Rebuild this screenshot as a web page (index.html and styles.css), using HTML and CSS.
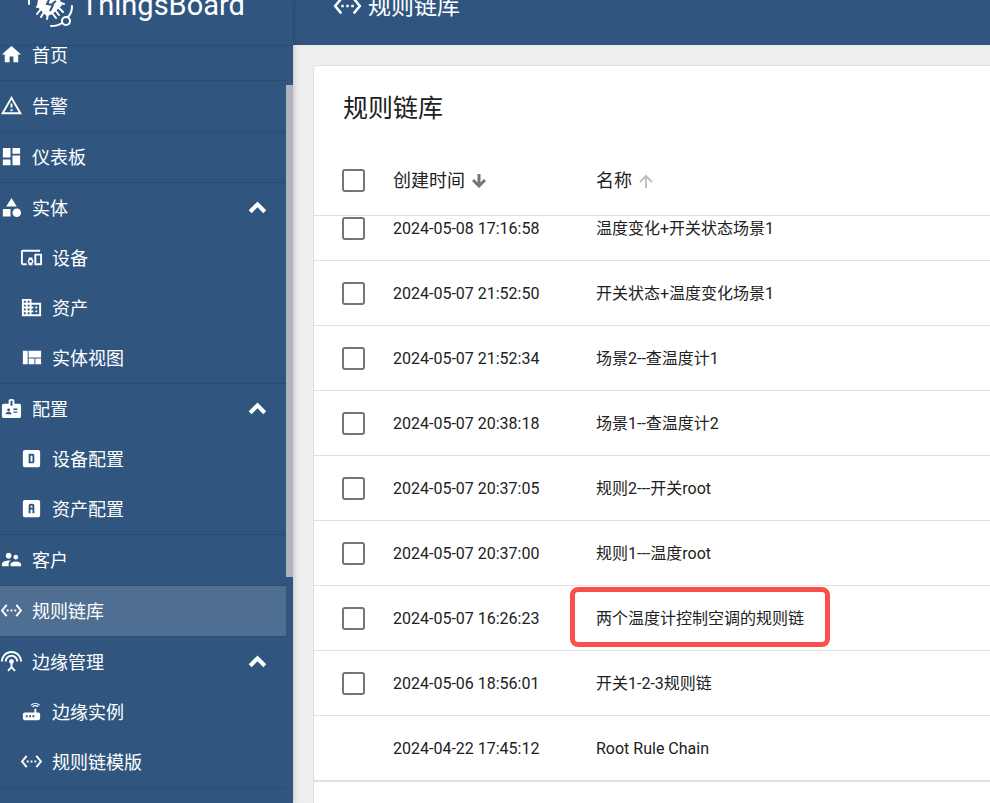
FILE: index.html
```html
<!DOCTYPE html>
<html lang="zh-CN">
<head>
<meta charset="utf-8">
<title>ThingsBoard</title>
<link rel="stylesheet" href="styles.css">
</head>
<body>
<div class="app">
  <aside class="sidebar">
    <a class="brand" href="#">
      <svg class="brand-mark" viewBox="28 0 46 28" fill="none" stroke="#fff" stroke-linecap="round" aria-hidden="true">
        <path d="M29 0v4" stroke-width="2"/>
        <path d="M39 0h20l2 5-9 8-5 2-9-9z" fill="#fff" stroke-width="2" stroke-linejoin="round"/>
        <path d="M39 5l-2 2M41 9l-4 5M44 12l-3 5M48 14l-1 5M52 13l4 5M55 10l4 5M58 7l5 5M61 3l3 1" stroke-width="2"/>
        <path d="M49 0l-2 4 6 1-3 6M56 1l-4 3" stroke="#305680" stroke-width="2" stroke-linecap="butt"/>
        <path d="M72 6c0 5-1 8-4 11M51 26c5 0 8-1 11-3" stroke-width="2"/>
        <circle cx="66" cy="21" r="4" stroke-width="2"/>
      </svg>
      <span>ThingsBoard</span>
    </a>
    <nav class="menu">
      <ul class="menu-list">
        <li><a class="item" href="#"><svg class="icon" viewBox="0 0 24 24"><path d="M10 20v-6h4v6h5v-8h3L12 3 2 12h3v8z"/></svg>首页</a></li>
        <li><a class="item" href="#"><svg class="icon" viewBox="0 0 24 24"><path d="M12 5.99L19.53 19H4.47L12 5.99M12 2L1 21h22L12 2zm1 14h-2v2h2v-2zm0-6h-2v4h2v-4z"/></svg>告警</a></li>
        <li><a class="item" href="#"><svg class="icon" viewBox="0 0 24 24"><path d="M3 13h8V3H3v10zm0 8h8v-6H3v6zm10 0h8V11h-8v10zm0-18v6h8V3h-8z"/></svg>仪表板</a></li>
        <li>
          <button class="item" type="button" aria-expanded="true"><svg class="icon" viewBox="0 0 24 24"><path d="M12 2l-5.5 9h11zM3 13.5h8v8H3z"/><circle cx="17.5" cy="17.5" r="4.5"/></svg>实体<svg class="chevron" viewBox="0 0 24 24"><path d="M5 16l7-7 7 7"/></svg></button>
          <ul>
            <li><a class="item sub" href="#"><svg class="icon" viewBox="0 0 24 24"><path d="M3 6h18V4H3c-1.100 0-2 .9-2 2v12c0 1.100.9 2 2 2h4v-2H3V6zm10 6H9v1.780c-.61.550-1 1.330-1 2.220s.39 1.670 1 2.220V20h4v-1.780c.61-.55 1-1.340 1-2.220s-.39-1.670-1-2.220V12zm-2 5.500c-.83 0-1.500-.67-1.500-1.500s.67-1.500 1.500-1.500 1.500.67 1.500 1.500-.67 1.500-1.500 1.500zM22 8h-6c-.5 0-1 .5-1 1v10c0 .5.5 1 1 1h6c.5 0 1-.5 1-1V9c0-.5-.5-1-1-1zm-1 10h-4v-8h4v8z"/></svg>设备</a></li>
            <li><a class="item sub" href="#"><svg class="icon" viewBox="0 0 24 24"><path d="M12 7V3H2v18h20V7H12zM6 19H4v-2h2v2zm0-4H4v-2h2v2zm0-4H4V9h2v2zm0-4H4V5h2v2zm4 12H8v-2h2v2zm0-4H8v-2h2v2zm0-4H8V9h2v2zm0-4H8V5h2v2zm10 12h-8v-2h2v-2h-2v-2h2v-2h-2V9h8v10zm-2-8h-2v2h2v-2zm0 4h-2v2h2v-2z"/></svg>资产</a></li>
            <li><a class="item sub" href="#"><svg class="icon" viewBox="0 0 24 24"><path d="M3 5h5v14H3zM9 5h13v7H9zM9 13h6v6H9zM16 13h6v6h-6z"/></svg>实体视图</a></li>
          </ul>
        </li>
        <li>
          <button class="item" type="button" aria-expanded="true"><svg class="icon" viewBox="0 0 24 24"><path fill-rule="evenodd" d="M20 7h-5V4c0-1.100-.9-2-2-2h-2c-1.100 0-2 .9-2 2v3H4c-1.100 0-2 .9-2 2v11c0 1.100.9 2 2 2h16c1.100 0 2-.9 2-2V9c0-1.100-.9-2-2-2zM9 12a1.500 1.500 0 110 3 1.500 1.500 0 010-3zm3 6H6v-.75c0-1 2-1.500 3-1.500s3 .5 3 1.500V18zm1-9h-2V4h2v5zm5 7.500h-4V15h4v1.500zm0-3h-4V12h4v1.500z"/></svg>配置<svg class="chevron" viewBox="0 0 24 24"><path d="M5 16l7-7 7 7"/></svg></button>
          <ul>
            <li><a class="item sub" href="#"><svg class="icon" viewBox="0 0 24 24"><path fill-rule="evenodd" d="M5 3h14a2 2 0 012 2v14a2 2 0 01-2 2H5a2 2 0 01-2-2V5a2 2 0 012-2zM9 7v10h4a2 2 0 002-2V9a2 2 0 00-2-2H9zm2 2h2v6h-2V9z"/></svg>设备配置</a></li>
            <li><a class="item sub" href="#"><svg class="icon" viewBox="0 0 24 24"><path fill-rule="evenodd" d="M5 3h14a2 2 0 012 2v14a2 2 0 01-2 2H5a2 2 0 01-2-2V5a2 2 0 012-2zM11 7a2 2 0 00-2 2v8h2v-4h2v4h2V9a2 2 0 00-2-2h-2zm0 2h2v2h-2V9z"/></svg>资产配置</a></li>
          </ul>
        </li>
        <li><a class="item" href="#"><svg class="icon" viewBox="0 0 24 24"><path d="M16.500 12c1.380 0 2.490-1.120 2.490-2.500S17.880 7 16.500 7 14 8.120 14 9.500s1.120 2.500 2.500 2.500zM9 11c1.660 0 2.990-1.340 2.990-3S10.660 5 9 5 6 6.340 6 8s1.340 3 3 3zm7.500 3c-1.830 0-5.500.920-5.500 2.750V19h11v-2.250c0-1.830-3.670-2.750-5.500-2.750zM9 13c-2.330 0-7 1.170-7 3.500V19h7v-2.250c0-.85.330-2.340 2.370-3.470C10.500 13.100 9.660 13 9 13z"/></svg>客户</a></li>
        <li><a class="item active" href="#" aria-current="page"><svg class="icon" viewBox="0 0 24 24"><path d="M7.770 6.760L6.230 5.480.820 12l5.410 6.520 1.540-1.280L3.420 12l4.350-5.240zM7 13h2v-2H7v2zm10-2h-2v2h2v-2zm-6 2h2v-2h-2v2zm6.770-7.520l-1.540 1.280L20.580 12l-4.350 5.240 1.540 1.280L23.180 12l-5.410-6.520z"/></svg>规则链库</a></li>
        <li>
          <button class="item" type="button" aria-expanded="true"><svg class="icon" viewBox="0 0 24 24"><path d="M12 5c-3.870 0-7 3.130-7 7h2c0-2.760 2.240-5 5-5s5 2.240 5 5h2c0-3.870-3.130-7-7-7zm1 9.290c.88-.39 1.500-1.260 1.500-2.290 0-1.380-1.120-2.500-2.500-2.500S9.500 10.620 9.500 12c0 1.020.620 1.900 1.500 2.290v3.300L7.590 21 9 22.410l3-3 3 3L16.410 21 13 17.590v-3.300zM12 1C5.930 1 1 5.930 1 12h2c0-4.970 4.030-9 9-9s9 4.030 9 9h2c0-6.070-4.930-11-11-11z"/></svg>边缘管理<svg class="chevron" viewBox="0 0 24 24"><path d="M5 16l7-7 7 7"/></svg></button>
          <ul>
            <li><a class="item sub" href="#"><svg class="icon" viewBox="0 0 24 24"><path d="M20.200 5.900l.8-.8C19.600 3.700 17.800 3 16 3s-3.600.7-5 2.100l.8.8C13 4.800 14.500 4.200 16 4.200s3 .6 4.200 1.700zm-.9.800c-.9-.9-2.100-1.400-3.300-1.400s-2.400.5-3.300 1.400l.8.8c.7-.7 1.600-1 2.500-1 .9 0 1.800.3 2.500 1l.8-.8zM19 13h-2V9h-2v4H5c-1.100 0-2 .9-2 2v4c0 1.100.9 2 2 2h14c1.100 0 2-.9 2-2v-4c0-1.100-.9-2-2-2zM8 18H6v-2h2v2zm3.500 0h-2v-2h2v2zm3.500 0h-2v-2h2v2z"/></svg>边缘实例</a></li>
            <li><a class="item sub" href="#"><svg class="icon" viewBox="0 0 24 24"><path d="M7.770 6.760L6.230 5.480.820 12l5.410 6.520 1.540-1.280L3.420 12l4.350-5.240zM7 13h2v-2H7v2zm10-2h-2v2h2v-2zm-6 2h2v-2h-2v2zm6.770-7.520l-1.540 1.280L20.580 12l-4.350 5.240 1.540 1.280L23.180 12l-5.410-6.520z"/></svg>规则链模版</a></li>
          </ul>
        </li>
      </ul>
      <div class="scroll-thumb"></div>
    </nav>
  </aside>
  <main class="main">
    <header class="topbar">
      <svg class="topbar-icon" viewBox="0 0 24 24"><path d="M7.770 6.760L6.230 5.480.820 12l5.410 6.520 1.540-1.280L3.420 12l4.350-5.240zM7 13h2v-2H7v2zm10-2h-2v2h2v-2zm-6 2h2v-2h-2v2zm6.770-7.520l-1.540 1.280L20.580 12l-4.350 5.240 1.540 1.280L23.180 12l-5.410-6.520z"/></svg>
      <span>规则链库</span>
    </header>
    <section class="card">
      <h1 class="title">规则链库</h1>
      <table class="rules">
        <colgroup><col class="col-check"><col class="col-time"><col></colgroup>
        <thead>
          <tr>
            <th><input type="checkbox" aria-label="全选"></th>
            <th><button class="sort" type="button">创建时间<svg class="arrow" viewBox="0 0 14 14"><path d="M7 0v12M1 6l6 6 6-6"/></svg></button></th>
            <th><button class="sort idle" type="button">名称<svg class="arrow" viewBox="0 0 14 14"><path d="M7 14V2M1 8l6-6 6 6"/></svg></button></th>
          </tr>
        </thead>
        <tbody>
          <tr class="partial"><td><input type="checkbox" aria-labelledby="r1"></td><td>2024-05-08 17:16:58</td><td id="r1">温度变化+开关状态场景1</td></tr>
          <tr><td><input type="checkbox" aria-labelledby="r2"></td><td>2024-05-07 21:52:50</td><td id="r2">开关状态+温度变化场景1</td></tr>
          <tr><td><input type="checkbox" aria-labelledby="r3"></td><td>2024-05-07 21:52:34</td><td id="r3">场景2--查温度计1</td></tr>
          <tr><td><input type="checkbox" aria-labelledby="r4"></td><td>2024-05-07 20:38:18</td><td id="r4">场景1--查温度计2</td></tr>
          <tr><td><input type="checkbox" aria-labelledby="r5"></td><td>2024-05-07 20:37:05</td><td id="r5">规则2---开关root</td></tr>
          <tr><td><input type="checkbox" aria-labelledby="r6"></td><td>2024-05-07 20:37:00</td><td id="r6">规则1---温度root</td></tr>
          <tr><td><input type="checkbox" aria-labelledby="r7"></td><td>2024-05-07 16:26:23</td><td id="r7"><span class="marked">两个温度计控制空调的规则链</span></td></tr>
          <tr><td><input type="checkbox" aria-labelledby="r8"></td><td>2024-05-06 18:56:01</td><td id="r8">开关1-2-3规则链</td></tr>
          <tr><td></td><td>2024-04-22 17:45:12</td><td>Root Rule Chain</td></tr>
        </tbody>
      </table>
    </section>
  </main>
</div>
</body>
</html>
```
FILE: styles.css
```css
* { box-sizing: border-box; }

body {
  margin: 0;
  font-family: Roboto, "Noto Sans CJK SC", sans-serif;
  font-size: 16px;
  color: #212121;
  background: #eee;
}

ul { list-style: none; margin: 0; padding: 0; }
a { color: inherit; text-decoration: none; }
button { border: 0; background: none; font: inherit; color: inherit; text-align: left; cursor: pointer; }

.app { display: flex; height: 100vh; overflow: hidden; }

/* Sidebar */
.sidebar {
  flex: 0 0 293px;
  display: flex;
  flex-direction: column;
  color: #fff;
  background: #305680;
  box-shadow: 0 0 6px rgba(0, 0, 0, 0.25);
  z-index: 1;
}

.brand {
  flex: 0 0 46px;
  display: flex;
  align-items: flex-start;
  gap: 7px;
  padding-left: 28px;
  border-bottom: 1px solid #2a4c73;
  font-size: 29px;
  line-height: 36px;
  overflow: hidden;
}
.brand span { margin-top: -13px; }
.brand-mark { width: 46px; height: 28px; }

.menu { position: relative; flex: 1; overflow: hidden; padding-right: 7px; }
.menu-list { margin-top: -16px; font-size: 18px; }
.menu-list > li { border-bottom: 1px solid #2a4c73; }

.item {
  display: flex;
  align-items: center;
  gap: 9px;
  width: 100%;
  height: 50px;
  padding: 0 16px 2px 0;
}
.item.sub { padding-left: 20px; }
.item.active { background: #4f6f92; }
.icon { flex: none; width: 23px; height: 23px; fill: #fff; }

.chevron {
  width: 25px;
  height: 25px;
  margin-left: auto;
  fill: none;
  stroke: #fff;
  stroke-width: 4;
}

.scroll-thumb {
  position: absolute;
  top: 39px;
  right: 0;
  width: 7px;
  height: 492px;
  background: #aeb3bd;
}

/* Content */
.main { flex: 1; min-width: 0; display: flex; flex-direction: column; }

.topbar {
  flex: 0 0 45px;
  display: flex;
  align-items: flex-start;
  gap: 5px;
  padding-left: 39px;
  color: #fff;
  background: #305680;
  font-size: 23px;
  line-height: 32px;
  overflow: hidden;
}
.topbar > * { margin-top: -9px; }
.topbar-icon { width: 31px; height: 30px; fill: #fff; }

.card {
  flex: 1;
  margin: 20px 0 0 20px;
  background: #fff;
  border: 1px solid #e0e0e0;
  border-width: 1px 0 0 1px;
  border-radius: 5px 0 0 0;
}

.title {
  margin: 0;
  padding: 24px 29px 20px;
  font-size: 25px;
  font-weight: 400;
  line-height: 38px;
}

.rules { width: 100%; table-layout: fixed; border-collapse: separate; border-spacing: 0; }
.col-check { width: 79px; }
.col-time { width: 203px; }

th, td {
  height: 65px;
  padding: 2px 0 0;
  border-bottom: 1px solid #e0e0e0;
  font-weight: 400;
  text-align: left;
  vertical-align: middle;
  line-height: 24px;
}
th { height: 68px; padding: 0 0 2px; }
th:first-child, td:first-child { padding-left: 28px; }
td:first-child { padding-top: 0; }
.partial td { height: 45px; padding-top: 1px; vertical-align: top; }
tbody tr:last-child td { height: 66px; border-bottom-width: 2px; }

input[type="checkbox"] {
  appearance: none;
  display: block;
  width: 23px;
  height: 23px;
  margin: 0;
  border: 2px solid #757575;
  border-radius: 3px;
}

.sort { display: flex; align-items: center; gap: 7px; padding: 0; font-size: 18px; }
.arrow { width: 14px; height: 14px; fill: none; stroke: #757575; stroke-width: 3; }
.idle .arrow { stroke: #c0c0c0; stroke-width: 2; }

.marked { position: relative; }
.marked::after {
  content: "";
  position: absolute;
  inset: -22px -26px -19px -26px;
  border: 5px solid #fa4f4b;
  border-radius: 8px;
}
```
